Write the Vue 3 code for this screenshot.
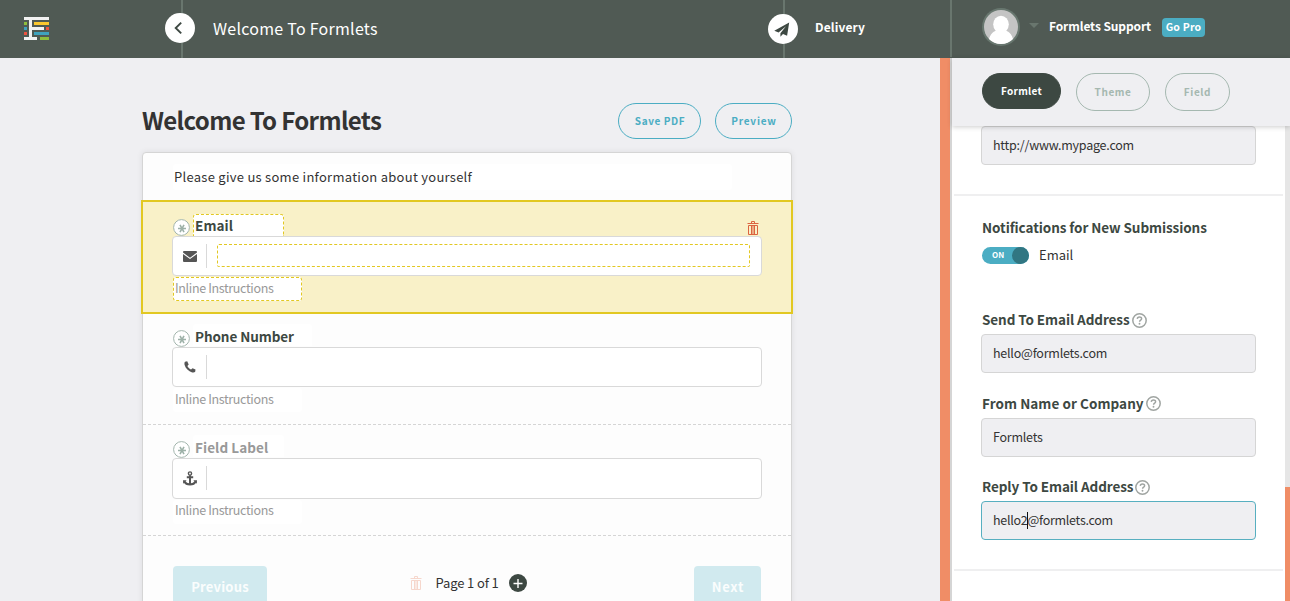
<script setup>
const rows = [
  { id: 1, label: 'Email', icon: 'mail', active: true },
  { id: 2, label: 'Phone Number', icon: 'phone' },
  { id: 3, label: 'Field Label', icon: 'anchor', muted: true },
]
const settings = [
  { id: 1, label: 'Send To Email Address', before: 'hello@formlets.com' },
  { id: 2, label: 'From Name or Company', before: 'Formlets', wide: true },
  { id: 3, label: 'Reply To Email Address', before: 'hello2', after: '@formlets.com', focus: true },
]
</script>

<template>
  <div class="app">
    <header class="top">
      <div class="logo-cell">
        <svg class="logo" width="25" height="23" viewBox="0 0 25 23" shape-rendering="crispEdges">
          <path fill="#f2f2f2" d="M0 0h25v3H0zM5 3h3v17H5zM8 10h12v3H8zM0 20h13v3H0z" />
          <path fill="#8fbe3c" d="M0 5h3v3H0zM16 20h9v3h-9z" />
          <path fill="#fbc72e" d="M10 5h15v3H10z" />
          <path fill="#3fa3bd" d="M0 10h3v3H0zM10 15h15v3H10z" />
          <path fill="#ee5340" d="M22 10h3v3h-3zM0 15h3v3H0z" />
        </svg>
      </div>
      <div class="title-cell">
        <span class="round back">
          <svg width="30" height="30" viewBox="0 0 30 30"><path d="M16.2 9.6L10.7 15l5.5 5.4" fill="none" stroke="#3d4842" stroke-width="1.9" /></svg>
        </span>
        <span class="crumb">Welcome To Formlets</span>
      </div>
      <div class="delivery-cell">
        <span class="round send">
          <svg width="30" height="30" viewBox="0 0 30 30"><path fill="#3d4842" d="M21.200 8.500L6.300 16.700l4.300 1.700 7.400-6.200-5.600 7v3.600l2.600-2.700 4.100 1.600z" /></svg>
        </span>
        <span class="delivery">Delivery</span>
      </div>
      <div class="user-cell">
        <svg class="avatar" width="38" height="38" viewBox="0 0 38 38">
          <defs><clipPath id="face"><circle cx="19" cy="19" r="17" /></clipPath></defs>
          <circle cx="19" cy="19" r="19" fill="#68776f" />
          <circle cx="19" cy="19" r="17" fill="#c4c4c4" />
          <g clip-path="url(#face)" fill="#fff">
            <ellipse cx="19" cy="16.3" rx="7.8" ry="8.6" />
            <path d="M6 38c0-9 4-15 9-15.500h8c5 .5 9 6.500 9 15.500z" />
          </g>
        </svg>
        <i class="caret"></i>
        <span class="user">Formlets Support</span>
        <span class="badge">Go Pro</span>
      </div>
    </header>

    <div class="body">
      <main class="stage">
        <div class="stage-head">
          <h1>Welcome To Formlets</h1>
          <button class="pill save">Save PDF</button>
          <button class="pill preview">Preview</button>
        </div>
        <section class="card">
          <div class="intro"><p>Please give us some information about yourself</p></div>
          <div v-for="r in rows" :key="r.id" class="row" :class="{ active: r.active, muted: r.muted }">
            <div class="label-line">
              <svg class="req" width="17" height="17" viewBox="0 0 17 17">
                <circle cx="8.500" cy="8.500" r="7.900" fill="#fff" stroke="#a3b5ad" />
                <path d="M5 9.500h8M7 5.900l4 7.200M11 5.900l-4 7.200" fill="none" stroke="#9db1a8" stroke-width="1.600" />
              </svg>
              <span class="label">{{ r.label }}</span>
              <svg v-if="r.active" class="trash" width="12" height="14" viewBox="0 0 12 14">
                <path d="M4.500 2V.5h3V2M.5 2.500h11M1.500 4.500h9v9h-9zM4.500 4.500v9M6 4.500v9M7.500 4.500v9" fill="none" stroke="#dc6440" />
              </svg>
            </div>
            <div class="field">
              <span class="ico">
                <svg v-if="r.icon === 'mail'" width="14" height="11" viewBox="0 0 14 11">
                  <path fill="#555" d="M1 0h12a1 1 0 0 1 1 1v.6L7 6.700 0 1.600V1a1 1 0 0 1 1-1zM0 3l7 5 7-5v7a1 1 0 0 1-1 1H1a1 1 0 0 1-1-1z" />
                </svg>
                <svg v-else-if="r.icon === 'phone'" width="12" height="12" viewBox="0 0 12 12">
                  <path fill="#555" d="M1 .8L3.200.3 4.700 3.500 3.400 4.900C4.200 6.500 5.400 7.700 7.100 8.500L8.500 7.200l3 1.400-.3 2.200c-.6.700-1.700.9-3 .6C4.500 10.300 1.600 7.500.6 4c-.3-1.300-.2-2.500.4-3.200z" />
                </svg>
                <svg v-else width="14" height="15" viewBox="0 0 14 15">
                  <path fill="none" stroke="#555" stroke-width="2" d="M7 4.300v9M3.800 6.300h6.400M1.400 10.500c.9 2 2.900 3 5.600 3s4.700-1 5.600-3" />
                  <circle cx="7" cy="2.500" r="1.600" fill="none" stroke="#555" stroke-width="1.400" />
                  <path fill="#555" d="M0 9.200l3.700.1L.2 12.800zM14 9.200l-3.700.1 3.500 3.500z" />
                </svg>
              </span>
              <span class="entry"></span>
            </div>
            <span class="hint">Inline Instructions</span>
          </div>
          <footer class="pager">
            <span class="nav prev">Previous</span>
            <span class="middle">
              <svg width="12" height="14" viewBox="0 0 12 14">
                <path d="M4.500 2V.5h3V2M.5 2.500h11M1.500 4.500h9v9h-9zM4.500 4.500v9M6 4.500v9M7.500 4.500v9" fill="none" stroke="#f6d7cc" />
              </svg>
              <span class="page">Page 1 of 1</span>
              <svg width="18" height="18" viewBox="0 0 18 18"><circle cx="9" cy="9" r="9" fill="#3d4842" /><path d="M9 5v9M4.500 9.500h9" stroke="#fff" stroke-width="1.400" /></svg>
            </span>
            <span class="nav next">Next</span>
          </footer>
        </section>
      </main>
      <div class="strip"></div>
      <aside class="side">
        <nav class="tabs">
          <span class="tab on">Formlet</span>
          <span class="tab theme">Theme</span>
          <span class="tab fld">Field</span>
        </nav>
        <div class="pane">
          <div class="settings">
            <div class="box url">http://www.mypage.com</div>
            <hr />
            <h3 class="note"><span>Notifications for New Submissions</span></h3>
            <div class="switch-line">
              <span class="switch"><b>ON</b><i></i></span>
              <span class="switch-text">Email</span>
            </div>
            <div v-for="s in settings" :key="s.id" class="setting">
              <h3 :class="{ wide: s.wide }"><span>{{ s.label }}</span>
                <svg width="15" height="15" viewBox="0 0 15 15">
                  <circle cx="7.500" cy="7.500" r="6.700" fill="none" stroke="#a0a5a2" stroke-width="1.500" />
                  <path d="M5.300 5.900c.1-2.600 4.300-2.500 4.300-.2 0 1.500-2 1.500-2 3.100" fill="none" stroke="#a0a5a2" stroke-width="1.500" />
                  <circle cx="7.500" cy="10.800" r=".95" fill="#a0a5a2" />
                </svg>
              </h3>
              <div class="box" :class="{ focus: s.focus }">{{ s.before }}<i v-if="s.focus" class="cursor"></i>{{ s.after }}</div>
            </div>
            <hr class="last" />
          </div>
          <div class="track"><div class="thumb"></div></div>
        </div>
      </aside>
    </div>
  </div>
</template>

<style>
html, body { overflow: hidden; }
</style>

<style scoped>
* { box-sizing: border-box; }
.app { width: 1290px; height: 601px; overflow: hidden; background: #efeff2; color: #333; font-family: "Noto Sans CJK SC", "Noto Sans", sans-serif; font-size: 13px; line-height: 20px; white-space: nowrap; display: flex; flex-direction: column; }
.top { height: 58px; flex: none; background: #505a54; display: grid; grid-template-columns: 181px 602px 167px 340px; color: #fff; }
.logo-cell { padding: 17px 0 0 24px; }
.logo { display: block; }
.title-cell, .delivery-cell, .user-cell { border-left: 2px solid #69766e; position: relative; display: flex; }
.user-cell { height: 57px; align-items: flex-start; padding-left: 30px; }
.round { position: absolute; width: 30px; height: 30px; border-radius: 50%; background: #fff; }
.round svg { display: block; }
.back { left: -18px; top: 13px; }
.send { left: -17px; top: 14px; }
.crumb { margin: 18px 0 0 30px; font-size: 16px; letter-spacing: .26px; }
.delivery { margin: 17px 0 0 30px; font-size: 12px; font-weight: 700; letter-spacing: .13px; }
.avatar { margin-top: 8px; }
.caret { margin: 23px 10px 0 9px; border: 5px solid transparent; border-top-color: #69766e; border-bottom: 0; }
.user { font-size: 12px; font-weight: 700; margin-top: 16px; width: 103px; letter-spacing: -.1px; }
.badge { margin: 18px 0 0 10px; width: 43px; height: 19px; line-height: 18px; border-radius: 4px; background: #4badc3; font-size: 10.500px; font-weight: 700; text-align: center; letter-spacing: .2px; }
.body { flex: 1; min-height: 0; display: flex; }
.stage { width: 940px; padding: 45px 148px 0 142px; }
.stage-head { display: flex; height: 49px; }
h1 { margin: -1px auto 0 0; font-size: 24px; line-height: 36px; font-weight: 700; letter-spacing: -.65px; }
.pill { height: 36px; border: 1px solid #4badc3; border-radius: 18px; background: transparent; color: #4badc3; font: 700 10px/34px "Noto Sans CJK SC", sans-serif; letter-spacing: .6px; padding: 0 0 0 1px; text-align: center; }
.save { width: 83px; margin-right: 14px; }
.preview { width: 77px; letter-spacing: .8px; }
.card { width: 650px; height: 520px; background: #fdfdfd; border: 1px solid #d5d5d5; border-radius: 4px; box-shadow: 0 0 6px rgba(0,0,0,.08); }
.intro { height: 47px; padding: 11px 0 0 30px; }
.intro p { margin: 0; width: 559px; height: 26px; line-height: 26px; padding-left: 1px; background: #fff; letter-spacing: .27px; border-radius: 3px; }
.row { height: 111px; padding: 10px 29px 0; border-bottom: 1px dashed #d5d5d5; }
.row.active { height: 114px; margin: 0 -2px; padding: 12px 29px 0; border: 2px solid #e2c822; background: #f9f1c8; }
.label-line { height: 23px; display: flex; padding-left: 1px; }
.active .label-line { height: 22px; }
.req { margin: 6px 3px 0 0; }
.active .req { margin-top: 5px; }
.label { height: 22px; min-width: 91px; padding: 0 17px 0 1px; border: 1px dashed transparent; border-bottom: 0; border-radius: 3px 3px 0 0; background: #fff; color: #3d4842; font-size: 13.500px; letter-spacing: -.08px; font-weight: 700; line-height: 22px; }
.muted .label { color: #999; letter-spacing: .08px; padding-right: 12px; }
.active .label { border-color: #e2c822; line-height: 20px; letter-spacing: .1px; }
.trash { margin: 7px 3px 0 auto; }
.field { width: 590px; height: 40px; background: #fff; border: 1px solid #d9d9d9; border-radius: 4px; display: flex; padding: 7px 11px 7px 0; }
.row.muted .field { height: 41px; }
.ico { width: 34px; height: 24px; border-right: 1px solid #d9d9d9; display: flex; align-items: center; justify-content: center; }
.entry { flex: 1; margin-left: 10px; }
.active .entry { border: 1px dashed #e2c822; border-radius: 2px; height: 23px; }
.hint { display: block; margin: 1px 0 0 1px; width: 129px; height: 24px; border: 1px dashed transparent; border-radius: 3px; background: #fff; color: #999; font-size: 12.500px; letter-spacing: -.35px; line-height: 20px; padding-left: 1px; }
.muted .hint { line-height: 18px; }
.active .hint { border-color: #e2c822; }
.pager { display: flex; padding: 30px 30px 0; justify-content: space-between; }
.nav { height: 40px; border-radius: 4px; background: #d1eaef; color: #fafdfd; font-weight: 700; font-size: 13px; line-height: 41px; text-align: center; letter-spacing: .2px; }
.prev { width: 94px; }
.next { width: 67px; letter-spacing: .7px; padding-left: 1px; }
.middle { display: flex; align-items: center; height: 34px; margin: 0 23px 0 -2px; }
.page { width: 62px; margin: 0 11px 0 14px; letter-spacing: -.13px; }
.strip { width: 12px; background: #f08d66; border-right: 2px solid #d5d5d5; }
.side { width: 338px; background: #fff; display: flex; flex-direction: column; }
.tabs { height: 68px; flex: none; background: #efeff2; box-shadow: 0 1px 5px rgba(0,0,0,.2); padding: 15px 0 0 30px; display: flex; gap: 15px; position: relative; z-index: 1; }
.tab { height: 38px; border: 1px solid #a5b8b0; border-radius: 19px; color: #a5b8b0; font-size: 10px; font-weight: 700; text-align: center; line-height: 36px; letter-spacing: .6px; }
.tab.on { width: 79px; height: 36px; line-height: 34px; border-color: #3d4842; background: #3d4842; color: #fff; letter-spacing: .3px; }
.theme { width: 74px; }
.fld { width: 65px; }
.pane { flex: 1; min-height: 0; display: flex; }
.settings { width: 333px; padding-left: 29px; }
.box { width: 275px; height: 39px; border: 1px solid #d5d5d5; border-radius: 4px; background: #efeff2; padding-left: 11px; font-size: 12.500px; line-height: 35px; letter-spacing: -.23px; }
.box.focus { border-color: #57afc0; letter-spacing: -.28px; }
hr { margin: 29px 2px 0 -27px; height: 2px; border: 0; background: #efeff0; }
h3 { margin: 0 0 0 1px; height: 20px; display: flex; align-items: center; gap: 2px; color: #3d4842; font-size: 13.500px; letter-spacing: -.08px; line-height: 20px; font-weight: 700; }
h3.wide { letter-spacing: .06px; }
h3 span { margin-top: -2px; }
.note { margin-top: 22px; }
.switch-line { display: flex; align-items: center; margin: 9px 0 46px 1px; height: 17px; gap: 10px; }
.switch { width: 47px; height: 17px; border-radius: 9px; background: #4badc3; display: flex; justify-content: space-between; color: #fff; font-size: 8px; line-height: 16px; padding-left: 10px; }
.switch i { width: 17px; height: 17px; border-radius: 50%; background: #317682; }
.switch-text { margin-top: -2px; }
.setting { height: 83.500px; }
.setting .box { margin-top: 4px; }
.cursor { display: inline-block; width: 1px; height: 17px; margin-right: -1px; background: #111; vertical-align: -4px; }
.last { margin-top: 8px; }
.track { width: 5px; background: #e6e6e6; padding-top: 361px; }
.thumb { height: 114px; background: #f08d66; }
</style>
